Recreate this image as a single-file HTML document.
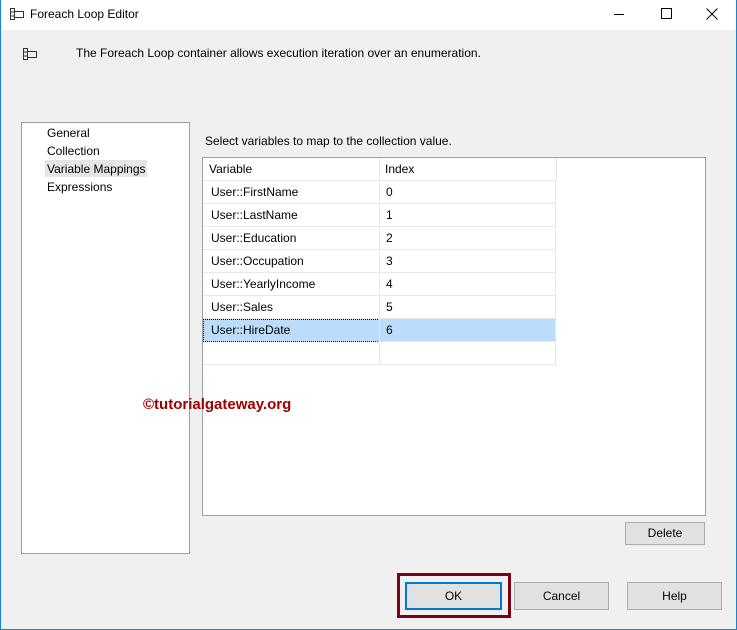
<!DOCTYPE html><html><head><style>
*{box-sizing:border-box}body{margin:0;width:737px;height:630px;background:#f0f0f0;font-family:"Liberation Sans",sans-serif;font-size:12px;color:#000;position:relative;overflow:hidden}
.a{position:absolute}
.btn{position:absolute;background:#e1e1e1;border:1px solid #adadad;text-align:center;line-height:21px;font-size:12px}
.row{position:absolute;left:203px;width:353px;height:23px;border-bottom:1px solid #e8e8e8}
.row span{position:absolute;top:4px}
</style></head><body>
<div class="a" style="left:0;top:0;width:737px;height:30px;background:#fff"></div>
<div class="a" style="left:0;top:0;width:1px;height:630px;background:#1883d7"></div>
<div class="a" style="left:0;top:629px;width:737px;height:1px;background:#1883d7"></div>
<div class="a" style="left:736px;top:0;width:1px;height:630px;background:#1883d7"></div>
<svg class="a" style="left:9px;top:7px" width="16" height="14"><path d="M1.5 1.5h4v11h-4zM5.5 4.5h9v6h-9M1.5 5h4M1.5 9h4" fill="none" stroke="#333"/></svg>
<div class="a" style="left:30px;top:7px;font-size:12px">Foreach Loop Editor</div>
<div class="a" style="left:614px;top:14px;width:10px;height:1px;background:#000"></div>
<div class="a" style="left:661px;top:8px;width:11px;height:11px;border:1px solid #000"></div>
<svg class="a" style="left:706px;top:8px" width="12" height="12"><path d="M0.5 0.5l11 11M11.5 0.5l-11 11" stroke="#000"/></svg>
<svg class="a" style="left:22px;top:47px" width="16" height="14"><path d="M1.5 1.5h4v11h-4zM5.5 4.5h9v6h-9M1.5 5h4M1.5 9h4" fill="none" stroke="#333"/></svg>
<div class="a" style="left:76px;top:46px">The Foreach Loop container allows execution iteration over an enumeration.</div>
<div class="a" style="left:21px;top:122px;width:169px;height:432px;background:#fff;border:1px solid #a0a0a0"></div>
<div class="a" style="left:45px;top:160px;width:102px;height:17px;background:#e5e5e5"></div>
<div class="a" style="left:47px;top:124px;line-height:18px">General<br>Collection<br>Variable Mappings<br>Expressions</div>
<div class="a" style="left:205px;top:134px">Select variables to map to the collection value.</div>
<div class="a" style="left:202px;top:157px;width:504px;height:359px;background:#fff;border:1px solid #a0a0a0"></div>
<div class="row" style="top:158px"><span style="left:6px">Variable</span><span style="left:182px">Index</span></div>
<div class="a" style="left:556px;top:158px;width:1px;height:23px;background:#e0e0e0"></div>
<div class="row" style="top:181px"><span style="left:8px">User::FirstName</span><span style="left:183px">0</span></div>
<div class="row" style="top:204px"><span style="left:8px">User::LastName</span><span style="left:183px">1</span></div>
<div class="row" style="top:227px"><span style="left:8px">User::Education</span><span style="left:183px">2</span></div>
<div class="row" style="top:250px"><span style="left:8px">User::Occupation</span><span style="left:183px">3</span></div>
<div class="row" style="top:273px"><span style="left:8px">User::YearlyIncome</span><span style="left:183px">4</span></div>
<div class="row" style="top:296px"><span style="left:8px">User::Sales</span><span style="left:183px">5</span></div>
<div class="row" style="top:319px;background:#bbdcfb"><span style="left:8px">User::HireDate</span><span style="left:183px">6</span></div>
<div class="a" style="left:203px;top:319px;width:177px;height:23px;border:1px dotted #000"></div>
<div class="row" style="top:342px"></div>
<div class="a" style="left:379px;top:158px;width:1px;height:207px;background:#e8e8e8"></div>
<div class="a" style="left:555px;top:181px;width:1px;height:184px;background:#e8e8e8"></div>
<div class="a" style="left:143px;top:396px;color:#a00000;font-weight:bold;font-size:15px">©tutorialgateway.org</div>
<div class="btn" style="left:625px;top:522px;width:80px;height:23px">Delete</div>
<div class="a" style="left:397px;top:573px;width:114px;height:45px;border:3px solid #7a0016"></div>
<div class="btn" style="left:405px;top:582px;width:97px;height:28px;border:2px solid #0078d7;line-height:24px">OK</div>
<div class="btn" style="left:514px;top:582px;width:95px;height:28px;line-height:26px">Cancel</div>
<div class="btn" style="left:627px;top:582px;width:95px;height:28px;line-height:26px">Help</div>
</body></html>
